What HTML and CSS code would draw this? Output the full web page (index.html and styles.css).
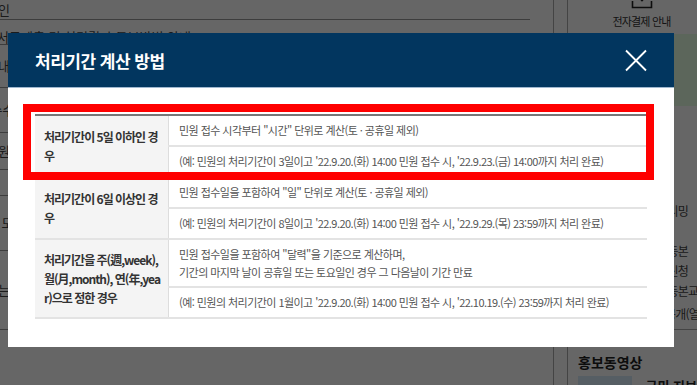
FILE: index.html
```html
<!DOCTYPE html>
<html lang="ko">
<head>
    <meta charset="UTF-8">
    <meta name="viewport" content="width=device-width, initial-scale=1.0">
    <title>처리기간 계산 방법</title>
    <link rel="stylesheet" href="styles.css">
</head>
<body>
    <!-- 배경 페이지 -->
    <div class="page">
        <div class="main">
            <div class="row row-1"><span class="cut">확인</span></div>
            <div class="row row-2"><span>서류제출 및 처리결과 통보방법 안내</span></div>
            <div class="row row-3"><span class="cut">안내</span></div>
            <div class="row row-4"><span class="cut">(수수료)</span></div>
            <div class="row row-5"><span class="cut">민원신청</span></div>
            <div class="row row-6"></div>
            <div class="row row-7"><span class="cut">알 모</span></div>
            <div class="row row-8"><span class="cut">있는</span></div>
        </div>
        <div class="side">
            <a href="#" class="pay">
                <svg width="22" height="20" viewBox="0 0 22 20" fill="none" stroke="#222" stroke-width="1.6">
                    <path d="M11 1v10M6.5 7l4.5 4.5 4.5-4.5"/>
                    <path d="M1.5 12v6.5h19V12"/>
                </svg>
                <span>전자결제 안내</span>
            </a>
            <div class="banner"></div>
            <ul class="links">
                <li class="first">영상 스트리밍</li>
                <li>주민등록 등본</li>
                <li>전자민원 신청</li>
                <li>주민등록 등본교부</li>
                <li class="last">사전정보공개(열린정보)</li>
            </ul>
            <h3 class="side-title">홍보동영상</h3>
            <div class="video">
                <div class="thumb"></div>
                <span>국민 지보</span>
            </div>
        </div>
    </div>

    <!-- 처리기간 계산 방법 팝업 -->
    <div class="dim">
        <div class="modal">
            <div class="modal-head">
                <h2>처리기간 계산 방법</h2>
                <a href="#" class="close" aria-label="닫기">
                    <svg width="22" height="23" viewBox="0 0 22 23" stroke="#fff" stroke-width="1.8">
                        <path d="M1 1.5l20 20M21 1.5l-20 20"/>
                    </svg>
                </a>
            </div>
            <div class="modal-body">
                <div class="table-wrap">
                    <table class="period">
                        <tr>
                            <th rowspan="2">처리기간이 5일 이하인 경우</th>
                            <td>민원 접수 시각부터 "시간" 단위로 계산(토 · 공휴일 제외)</td>
                        </tr>
                        <tr>
                            <td>(예: 민원의 처리기간이 3일이고 '22.9.20.(화) 14:00 민원 접수 시, '22.9.23.(금) 14:00까지 처리 완료)</td>
                        </tr>
                        <tr>
                            <th rowspan="2">처리기간이 6일 이상인 경우</th>
                            <td>민원 접수일을 포함하여 "일" 단위로 계산(토 · 공휴일 제외)</td>
                        </tr>
                        <tr>
                            <td>(예: 민원의 처리기간이 8일이고 '22.9.20.(화) 14:00 민원 접수 시, '22.9.29.(목) 23:59까지 처리 완료)</td>
                        </tr>
                        <tr>
                            <th rowspan="2">처리기간을 주(週,week), 월(月,month), 연(年,year)으로 정한 경우</th>
                            <td class="multi">민원 접수일을 포함하여 "달력"을 기준으로 계산하며,<br>기간의 마지막 날이 공휴일 또는 토요일인 경우 그 다음날이 기간 만료</td>
                        </tr>
                        <tr>
                            <td>(예: 민원의 처리기간이 1월이고 '22.9.20.(화) 14:00 민원 접수 시, '22.10.19.(수) 23:59까지 처리 완료)</td>
                        </tr>
                    </table>
                    <div class="mark"></div> <!-- 강조 표시 -->
                </div>
            </div>
        </div>
    </div>
</body>
</html>
```

FILE: styles.css
```css
body {
    margin: 0;
    overflow: hidden;
    background: #fff;
    color: #333;
    font-family: "Noto Sans CJK KR", "Noto Sans", sans-serif;
}

/* 배경 페이지 */
.page {
    display: flex;
    height: 385px;
    overflow: hidden;
}

.main {
    width: 530px;
    padding-right: 23px;
    border-right: 1px solid #aaa;
}

.row {
    box-sizing: border-box;
    border-bottom: 1px solid #999;
    font-size: 13px;
    line-height: 16px;
    color: #444;
    white-space: nowrap;
    overflow: hidden;
    display: flex;
    align-items: center;
}

.row .cut {
    margin-left: -14px;
}

.row-1 { height: 20px; }
.row-2 { height: 25px; align-items: flex-start; padding-top: 9px; }
.row-2 span { margin-left: -3px; }
.row-3 { height: 43px; }
.row-4 { height: 45px; }
.row-5 { height: 37px; }
.row-6 { height: 26px; }
.row-7 { height: 55px; }
.row-8 { height: 79px; }

.side {
    margin-left: 13px;
    flex: 1;
    border-left: 1px solid #aaa;
    padding-left: 10px;
    white-space: nowrap;
    overflow: hidden;
}

.pay {
    display: flex;
    flex-direction: column;
    align-items: center;
    margin-top: -11px;
    padding-left: 8px;
    color: #333;
    font-size: 11px;
    letter-spacing: -0.8px;
    text-decoration: none;
}

.pay svg {
    margin-bottom: 4px;
}

.banner {
    height: 72px;
    margin-top: 5px;
    margin-left: -10px;
    background: #e6ffe4;
}

.links {
    list-style: none;
    margin: 0 -10px 0 0;
    padding: 95px 0 5px 46px;
    border-bottom: 1px solid #aaa;
    font-size: 12px;
    letter-spacing: -0.8px;
    color: #444;
    overflow: hidden;
}

.links li {
    line-height: 20px;
}

.links .first {
    margin-bottom: 20px;
}

.links .last {
    margin-top: 3px;
}

.side-title {
    margin: 22px 0 4px;
    font-size: 14px;
    line-height: 20px;
    color: #222;
}

.video {
    display: flex;
    gap: 14px;
    font-size: 13px;
    font-weight: bold;
    color: #222;
}

.thumb {
    width: 59px;
    height: 40px;
    background: #d6ecfa;
}

/* 팝업 */
.dim {
    position: fixed;
    top: 0;
    left: 0;
    right: 0;
    bottom: 0;
    background: rgba(0, 0, 0, 0.6);
    padding: 33px 0 0 8px;
}

.modal {
    width: 666px;
    background: #fff;
}

.modal-head {
    height: 54px;
    padding: 0 27px;
    background: #02365f;
    border-bottom: 1px solid #9fb8d0;
    display: flex;
    align-items: center;
    justify-content: space-between;
}

.modal-head h2 {
    margin: 0;
    color: #fff;
    font-size: 17px;
    font-weight: bold;
    letter-spacing: -0.5px;
}

.close {
    display: flex;
}

.modal-body {
    padding: 26px 27px 28px;
}

.table-wrap {
    position: relative;
}

.period {
    width: 100%;
    border-collapse: collapse;
    border-top: 2px solid #777;
    border-bottom: 2px solid #888;
}

.period th,
.period td {
    padding: 5px 10px;
    line-height: 19px;
    border-bottom: 2px solid #e3e3e3;
    text-align: left;
}

.period th {
    width: 117px;
    padding-left: 9px;
    padding-right: 7px;
    background: #f4f4f4;
    border-right: 1px solid #ddd;
    color: #333;
    font-size: 12px;
    letter-spacing: -1px;
    word-break: break-all;
}

.period td {
    color: #555;
    font-size: 11px;
    letter-spacing: -0.55px;
}

.period .multi {
    line-height: 18px;
}

/* 빨간 강조 박스 */
.mark {
    position: absolute;
    left: -12px;
    top: -10px;
    width: 631px;
    height: 76px;
    box-sizing: border-box;
    border: 8px solid #f00;
}
```
